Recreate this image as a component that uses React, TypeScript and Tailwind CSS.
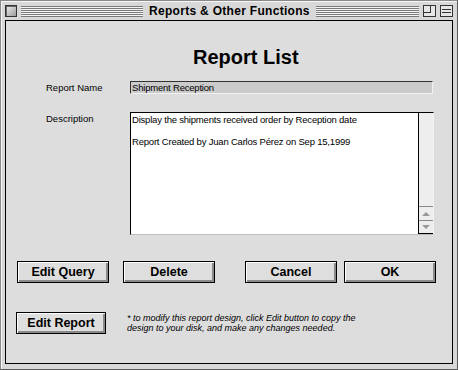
import React from "react";

function MacButton({ label, w = "w-[92px]" }: { label: string; w?: string }) {
  return (
    <div
      className={`${w} h-[22px] border border-black bg-[#dedede] shadow-[inset_1px_1px_0_#ffffff,inset_-2px_-2px_0_#8a8a8a] flex items-center justify-center text-[12.5px] font-bold leading-none`}
    >
      {label}
    </div>
  );
}

function Stripes({ className = "flex-1" }: { className?: string }) {
  return (
    <div
      className={`${className} h-[11px] bg-[repeating-linear-gradient(to_bottom,#7a7a7a_0px,#7a7a7a_1px,#f4f4f4_1px,#f4f4f4_2px)]`}
    />
  );
}

export default function App() {
  return (
    <div className="w-[458px] h-[370px] bg-[#dddddd] font-['Liberation_Sans',Arial,sans-serif] text-black">
      <div className="w-full h-full border border-[#8a8a8a] border-r-[#5a5a5a] border-b-[#5a5a5a] bg-[#d8d8d8] shadow-[inset_1px_1px_0_#f6f6f6] flex flex-col px-[4px] pb-[5px]">
        {/* title bar */}
        <div className="h-[19px] flex items-center gap-[4px] pt-[1px]">
          <div className="w-[12px] h-[12px] border border-[#333] bg-[linear-gradient(135deg,#f2f2f2,#9a9a9a)] shadow-[inset_1px_1px_0_#666]" />
          <Stripes className="w-[122px]" />
          <div className="text-[12px] font-bold leading-none px-[2px] tracking-[0.3px]">
            Reports &amp; Other Functions
          </div>
          <Stripes />
          <div className="w-[13px] h-[12px] border border-[#333] bg-[#e6e6e6] relative">
            <div className="absolute left-0 top-0 w-[7px] h-[7px] border-r border-b border-[#333]" />
          </div>
          <div className="w-[13px] h-[12px] border border-[#333] bg-[#e6e6e6] flex flex-col justify-center gap-[2px] px-[1px]">
            <div className="h-px bg-[#333]" />
            <div className="h-px bg-[#333]" />
          </div>
        </div>

        {/* content */}
        <div className="flex-1 border border-black bg-[#dddddd] flex flex-col">
          <div className="mt-[25px] h-[22px] pl-[187px] text-[20px] font-bold leading-[22px]">Report List</div>

          <div className="mt-[13px] flex items-center h-[13px]">
            <div className="w-[124px] pl-[40px] text-[9.5px] leading-none">Report Name</div>
            <div className="w-[303px] h-[13px] bg-[#cbcbcb] border-t border-l border-[#333] border-b border-b-[#f2f2f2] border-r border-r-[#f2f2f2] text-[9.5px] leading-[11px] pl-[1px] tracking-[-0.2px]">
              Shipment Reception
            </div>
          </div>

          <div className="mt-[18px] flex h-[123px]">
            <div className="w-[124px] pl-[40px] pt-[2px] text-[9.5px] leading-none">Description</div>
            <div className="w-[304px] h-[123px] flex bg-white border-t border-l border-black border-b border-b-[#bdbdbd] border-r border-r-[#f2f2f2]">
              <div className="flex-1 pl-[1px] pt-[1px] text-[9.5px] leading-[11px] tracking-[-0.2px]">
                <div>Display the shipments received order by Reception date</div>
                <div className="h-[11px]" />
                <div>Report Created by Juan Carlos Pérez on Sep 15,1999</div>
              </div>
              <div className="w-[15px] flex flex-col border-l border-black bg-[#eeeeee]">
                <div className="flex-1" />
                <div className="h-[14px] border-t border-[#888] flex items-center justify-center">
                  <div className="w-0 h-0 border-l-[4px] border-r-[4px] border-b-[4px] border-l-transparent border-r-transparent border-b-[#999]" />
                </div>
                <div className="h-[14px] border-t border-[#888] border-b border-b-black flex items-center justify-center">
                  <div className="w-0 h-0 border-l-[4px] border-r-[4px] border-t-[4px] border-l-transparent border-r-transparent border-t-[#999]" />
                </div>
              </div>
            </div>
          </div>

          <div className="mt-[26px] flex pl-[11px]">
            <MacButton label="Edit Query" />
            <div className="w-[14px]" />
            <MacButton label="Delete" />
            <div className="w-[30px]" />
            <MacButton label="Cancel" />
            <div className="w-[7px]" />
            <MacButton label="OK" />
          </div>

          <div className="mt-[29px] flex pl-[10px] items-start">
            <MacButton label="Edit Report" w="w-[90px]" />
            <div className="ml-[21px] pt-[1px] text-[9px] italic leading-[10px]">
              <div>* to modify this report design, click Edit button to copy the</div>
              <div>design to your disk, and make any changes needed.</div>
            </div>
          </div>
        </div>
      </div>
    </div>
  );
}
